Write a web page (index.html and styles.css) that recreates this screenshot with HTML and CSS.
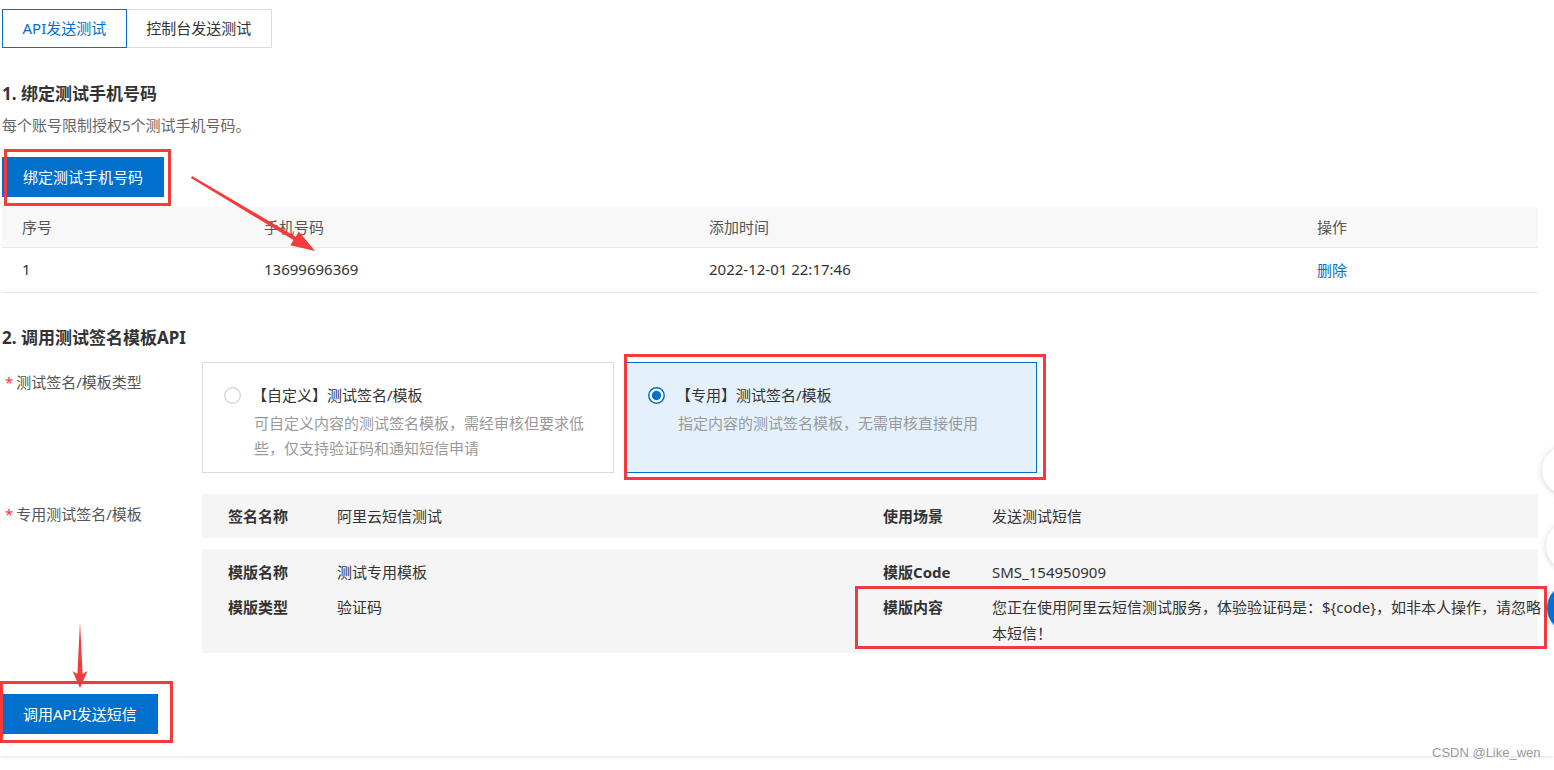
FILE: index.html
```html
<!DOCTYPE html>
<html lang="zh-CN">
<head>
<meta charset="utf-8">
<title>API发送测试</title>
<link rel="stylesheet" href="styles.css">
</head>
<body>
<div class="card">
  <div class="tabs">
    <div class="tab active">API发送测试</div>
    <div class="tab">控制台发送测试</div>
  </div>

  <h2 class="sec-title first">1. 绑定测试手机号码</h2>
  <p class="sec-desc">每个账号限制授权5个测试手机号码。</p>
  <button class="btn">绑定测试手机号码</button>

  <table class="tbl">
    <colgroup>
      <col class="c1"><col class="c2"><col class="c3"><col class="c4">
    </colgroup>
    <thead>
      <tr><th>序号</th><th>手机号码</th><th>添加时间</th><th>操作</th></tr>
    </thead>
    <tbody>
      <tr><td>1</td><td>13699696369</td><td>2022-12-01 22:17:46</td><td><a class="link">删除</a></td></tr>
    </tbody>
  </table>

  <h2 class="sec-title second">2. 调用测试签名模板API</h2>

  <div class="form-row">
    <div class="label"><span class="req">*</span>测试签名/模板类型</div>
    <div class="options">
      <div class="option">
        <svg class="radio" width="17" height="17" viewBox="0 0 17 17"><circle cx="8.5" cy="8.5" r="7.8" fill="#fff" stroke="#c2c2c2" stroke-width="1"/></svg>
        <div class="opt-body">
          <div class="opt-title">【自定义】测试签名/模板</div>
          <div class="opt-desc">可自定义内容的测试签名模板，需经审核但要求低些，仅支持验证码和通知短信申请</div>
        </div>
      </div>
      <div class="option selected">
        <svg class="radio" width="17" height="17" viewBox="0 0 17 17"><circle cx="8.5" cy="8.5" r="7.7" fill="#fff" stroke="#0070cc" stroke-width="1.5"/><circle cx="8.5" cy="8.5" r="4.7" fill="#0070cc"/></svg>
        <div class="opt-body">
          <div class="opt-title">【专用】测试签名/模板</div>
          <div class="opt-desc">指定内容的测试签名模板，无需审核直接使用</div>
        </div>
      </div>
    </div>
  </div>

  <div class="form-row row2">
    <div class="label"><span class="req">*</span>专用测试签名/模板</div>
    <div class="panels">
      <div class="panel">
        <div class="k">签名名称</div><div class="v">阿里云短信测试</div>
        <div class="k">使用场景</div><div class="v">发送测试短信</div>
      </div>
      <div class="panel panel2">
        <div class="k">模版名称</div><div class="v">测试专用模板</div>
        <div class="k">模版Code</div><div class="v">SMS_154950909</div>
        <div class="k">模版类型</div><div class="v">验证码</div>
        <div class="k">模版内容</div><div class="v">您正在使用阿里云短信测试服务，体验验证码是：${code}，如非本人操作，请忽略本短信！</div>
      </div>
    </div>
  </div>

  <button class="btn btn-send">调用API发送短信</button>

  <div class="mark mark-1"></div>
  <div class="mark mark-2"></div>
  <div class="mark mark-3"></div>
  <div class="mark mark-4"></div>
  <svg class="arrows" width="1554" height="770" viewBox="0 0 1554 770">
    <polygon fill="#f43a3a" points="192,176 295.7,236.7 298.8,231.6 315,251 290.4,245.2 293.5,240.1 191,178"/>
    <polygon fill="#f43a3a" points="80,622 82.6,674 87.5,671 80,688 72.5,671 77.4,674"/>
  </svg>
</div>

<div class="float-btn fb-1"></div>
<div class="float-btn fb-2"></div>
<div class="float-btn fb-3"></div>
<div class="watermark">CSDN @Like_wen</div>
</body>
</html>
```
FILE: styles.css
```css
* { box-sizing: border-box; }
html, body { margin: 0; padding: 0; }
body {
  font-family: "Noto Sans", "Noto Sans CJK SC", sans-serif;
  font-size: 15px;
  color: #333;
  background: #fff;
  width: 1554px;
  height: 770px;
  overflow: hidden;
  position: relative;
}

.card {
  position: relative;
  background: #fff;
  padding: 9px 16px 22px 2px;
  box-shadow: 0 1px 3px rgba(0, 0, 0, 0.12);
}

/* tabs */
.tabs { display: flex; }
.tab {
  height: 39px;
  line-height: 37px;
  padding: 0 20px;
  border: 1px solid #dcdcdc;
  color: #333;
  background: #fff;
}
.tab.active { padding: 0 19.5px; }
.tab + .tab { margin-left: -1px; padding: 0 19.5px; }
.tab.active {
  border-color: #0070cc;
  color: #0070cc;
  position: relative;
  z-index: 1;
}

/* section titles */
.sec-title {
  margin: 0;
  font-size: 17px;
  line-height: 24px;
  font-weight: 700;
  color: #333;
}
.sec-title.first { margin-top: 34px; }
.sec-title.second { margin-top: 33px; }
.sec-desc {
  margin: 9px 0 0;
  line-height: 20px;
  color: #666;
}

/* buttons */
.btn {
  display: block;
  height: 40px;
  padding: 0 21px;
  border: none;
  background: #0070cc;
  color: #fff;
  font-family: inherit;
  font-size: 15px;
  line-height: 40px;
  margin-top: 22px;
}
.btn-send { margin-top: 41px; }

/* table */
.tbl {
  margin-top: 10px;
  width: 1536px;
  border-collapse: collapse;
  table-layout: fixed;
}
.tbl .c1 { width: 242px; }
.tbl .c2 { width: 445px; }
.tbl .c3 { width: 608px; }
.tbl .c4 { width: 241px; }
.tbl th {
  height: 40px;
  padding: 0 0 1px 20px;
  background: #f8f8f8;
  border-bottom: 1px solid #e6e6e6;
  text-align: left;
  font-weight: 400;
  color: #555;
}
.tbl td {
  height: 45px;
  padding: 0 0 1px 20px;
  border-bottom: 1px solid #e6e6e6;
  color: #333;
}
.link { color: #0070cc; cursor: pointer; }

/* form rows */
.form-row {
  display: flex;
  margin-top: 12px;
}
.form-row.row2 { margin-top: 21px; }
.label {
  flex: 0 0 200px;
  padding: 10px 0 0 3px;
  line-height: 20px;
  color: #555;
}
.req { color: #f33; margin-right: 3px; }

.options { display: flex; gap: 12px; }
.option {
  display: flex;
  align-items: flex-start;
  width: 412px;
  height: 111px;
  padding: 20px 20px 10px 21px;
  border: 1px solid #dcdcdc;
  background: #fff;
}
.option.selected {
  width: 411px;
  border-color: #0070cc;
  background: #e4f1fc;
}
.radio { flex: 0 0 17px; margin-top: 4px; }
.opt-body { margin-left: 13px; }
.opt-title {
  line-height: 25px;
  color: #333;
  margin-left: -2px;
}
.opt-desc {
  margin-top: 3px;
  line-height: 25px;
  color: #999;
}

/* info panels */
.panels { width: 1336px; }
.panel {
  display: grid;
  grid-template-columns: 109px 546px 109px 556px;
  row-gap: 9px;
  background: #f5f5f5;
  padding: 9px 0 9px 26px;
  line-height: 26px;
}
.panel2 { margin-top: 11px; padding: 10px 0 7px 26px; }
.panel .k { font-weight: 700; color: #333; }
.panel .v { color: #333; }

/* annotations */
.mark {
  position: absolute;
  border: 3px solid #f43a3a;
  pointer-events: none;
}
.mark-1 { left: 4px; top: 149px; width: 167px; height: 57px; }
.mark-2 { left: 624px; top: 354px; width: 422px; height: 126px; }
.mark-3 { left: 855px; top: 586px; width: 692px; height: 63px; }
.mark-4 { left: 0; top: 681px; width: 173px; height: 62px; }
.arrows {
  position: absolute;
  left: 0;
  top: 0;
  pointer-events: none;
}

/* floating tools on the right edge */
.float-btn {
  position: absolute;
  width: 48px;
  height: 48px;
  border-radius: 50%;
  background: #fff;
  box-shadow: 0 1px 6px rgba(0, 0, 0, 0.18);
}
.fb-1 { left: 1542px; top: 446px; }
.fb-2 { left: 1546px; top: 522px; }
.fb-3 { left: 1547px; top: 584px; background: #0a6fd0; }

.watermark {
  position: absolute;
  left: 1432px;
  top: 745px;
  font-family: "Liberation Sans", Arial, sans-serif;
  font-size: 13px;
  line-height: 16px;
  color: #999;
}
```
